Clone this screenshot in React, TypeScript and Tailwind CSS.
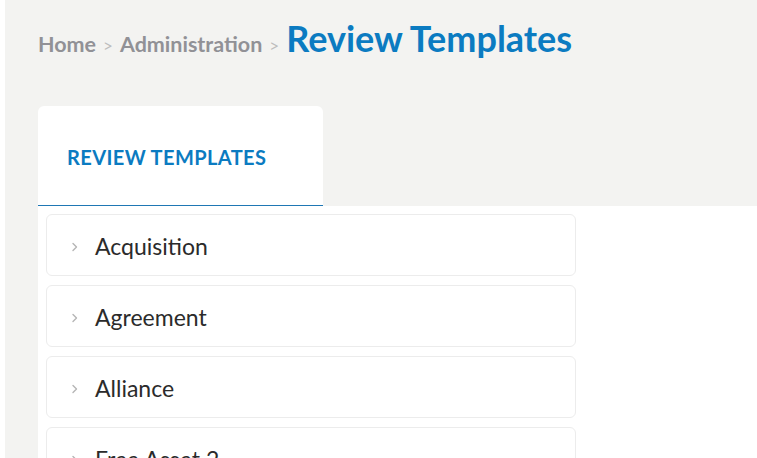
import React from "react";

const items = ["Acquisition", "Agreement", "Alliance", "Free Asset 2", "Joint Venture"];

function Chevron() {
  return (
    <svg width="10" height="12" viewBox="0 0 10 12" className="shrink-0">
      <path d="M3 2.5 L6.5 6 L3 9.5" fill="none" stroke="#b5b5b5" strokeWidth="1.4" strokeLinecap="round" strokeLinejoin="round" />
    </svg>
  );
}

export default function App() {
  return (
    <div className="flex h-[458px] w-[757px] overflow-hidden bg-white" style={{ fontFamily: "Lato, 'Open Sans', sans-serif" }}>
      <div className="w-[5px] shrink-0 bg-white" />
      <div className="flex min-w-0 flex-1 flex-col bg-[#f3f3f1]">
        <div className="flex h-[106px] shrink-0 items-start pl-[33px] pt-[20px]">
          <div className="flex items-baseline">
            <span className="text-[21.5px] font-bold text-[#919196]">Home</span>
            <span className="mx-[7px] text-[17px] text-[#bdbdbd]">&gt;</span>
            <span className="text-[21.5px] font-bold text-[#919196]">Administration</span>
            <span className="mx-[7px] text-[17px] text-[#bdbdbd]">&gt;</span>
            <span className="text-[36px] font-bold leading-none text-[#0b7bc1]">Review Templates</span>
          </div>
        </div>
        <div className="flex shrink-0 pl-[33px]">
          <div className="flex h-[100px] w-[285px] items-center rounded-t-[6px] border-b border-[#1f77b4] bg-white pl-[29px] pt-[2px]">
            <span className="text-[20px] font-bold tracking-[0.4px] text-[#0b7bc1]">REVIEW TEMPLATES</span>
          </div>
        </div>
        <div className="ml-[33px] flex flex-1 flex-col gap-[9px] bg-white pl-[8px] pt-[8px]">
          {items.map((name) => (
            <div key={name} className="flex h-[62px] w-[530px] shrink-0 items-center gap-[15px] rounded-[6px] border border-[#ececec] bg-white pl-[23px] pt-[3px]">
              <Chevron />
              <span className="text-[23px] text-[#2b2b2b]">{name}</span>
            </div>
          ))}
        </div>
      </div>
    </div>
  );
}
